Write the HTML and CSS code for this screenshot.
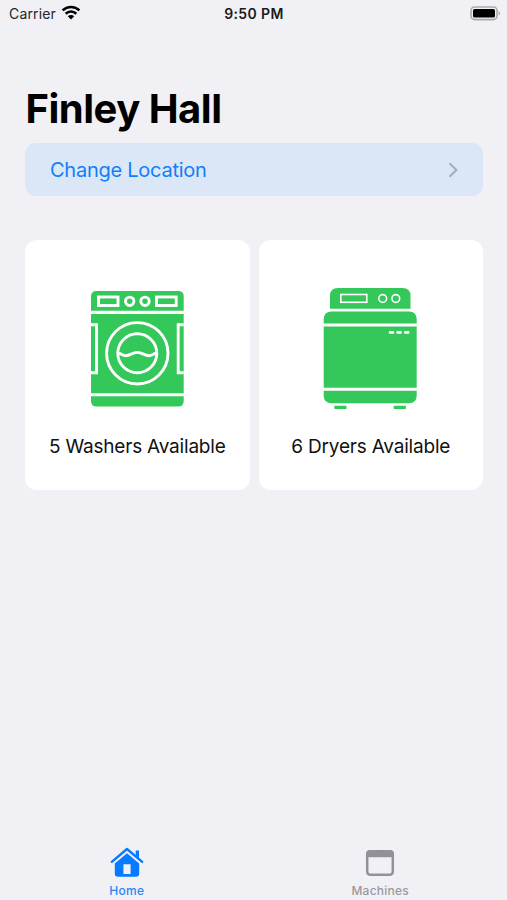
FILE: index.html
```
<!DOCTYPE html>
<html lang="en">
<head>
    <meta charset="UTF-8">
    <meta name="viewport" content="width=device-width, initial-scale=1.0">
    <title>Finley Hall</title>
    <link rel="stylesheet" href="styles.css">
</head>
<body>

    <header class="status-bar">
        <div class="carrier">
            <span>Carrier</span>
            <svg class="wifi" viewBox="0 0 20 15" width="20" height="15">
                <path d="M1.600 5.400a12 12 0 0 1 16.800 0" />
                <path d="M4.700 8.700a7.600 7.600 0 0 1 10.600 0" />
                <path class="dot" d="M10 14.600l-3.200-3.300a4.600 4.600 0 0 1 6.400 0z" />
            </svg>
        </div>
        <div class="time">9:50 PM</div>
        <div class="battery">
            <svg viewBox="0 0 31 15" width="31" height="15">
                <rect x="1" y="1" width="26" height="12.600" rx="3.600" fill="#f2f1f6" stroke="#aaa9ad" stroke-width="1.600" />
                <rect x="3" y="3" width="22" height="8.600" rx="1.600" fill="#000" />
                <path d="M28.600 5q3 2.300 0 4.600z" fill="#aaa9ad" />
            </svg>
        </div>
    </header>

    <main class="main-content">
        <h1>Finley Hall</h1>

        <a class="change-location" href="#">
            <span>Change Location</span>
            <svg viewBox="0 0 10 16" width="10" height="16">
                <path d="M1.500 1.300L8.300 8l-6.800 6.700" />
            </svg>
        </a>

        <div class="cards">
            <div class="card">
                <!-- Washer -->
                <svg class="machine" viewBox="0 0 115 135" width="115" height="135">
                    <path class="fill" d="M11 30.700V16.500q0-5.500 5.500-5.500h81.700q5.500 0 5.500 5.500v14.200z" />
                    <path class="fill" d="M11 34h92.700v79.300H11z" />
                    <path class="fill" d="M11 116.300h92.700v4.700q0 5.600-5.500 5.600H16.500q-5.500 0-5.500-5.600z" />
                    <g class="line">
                        <rect x="18.500" y="17" width="19.500" height="8.500" />
                        <rect x="76.500" y="17" width="19.700" height="8.500" />
                        <circle cx="49.700" cy="21.300" r="4.200" />
                        <circle cx="65" cy="21.300" r="4.200" />
                        <path d="M11 44.700h5.500v48H11" />
                        <path d="M103.700 44.700h-5.500v48h5.500" />
                        <circle cx="57.300" cy="73.300" r="30.700" />
                        <circle cx="57.300" cy="73.300" r="19.500" />
                        <path d="M38.500 73.200c3 .3 4 2.500 7.300 2.500 4.400 0 6.500-3.300 11.500-3.300s7.100 3.300 11.500 3.300c3.300 0 4.300-2.200 7.300-2.500" />
                    </g>
                </svg>
                <p>5 Washers Available</p>
            </div>

            <div class="card">
                <!-- Dryer -->
                <svg class="machine" viewBox="1 0 115 135" width="115" height="135">
                    <path class="fill" d="M18 28.800V16q0-8 8-8h64.500q8 0 8 8v12.800z" />
                    <path class="fill" d="M11.700 43.500v-4q0-8 8-8h77q8 0 8 8v4z" />
                    <path class="fill" d="M11.700 46.500h93v61.300h-93z" />
                    <path class="fill" d="M11.700 110.700h93v4.500q0 8-8 8h-77q-8 0-8-8z" />
                    <rect class="fill" x="22.300" y="125.700" width="12.200" height="3.300" rx=".7" />
                    <rect class="fill" x="81.700" y="125.700" width="12.200" height="3.300" rx=".7" />
                    <g class="line thin">
                        <rect x="28.800" y="14.500" width="26" height="7.800" />
                        <circle cx="70.700" cy="18.500" r="3.900" />
                        <circle cx="83.800" cy="18.500" r="3.900" />
                    </g>
                    <g class="vents">
                        <rect x="76.800" y="51" width="5.400" height="2.800" rx="1" />
                        <rect x="84.400" y="51" width="5.400" height="2.800" rx="1" />
                        <rect x="92" y="51" width="5.400" height="2.800" rx="1" />
                    </g>
                </svg>
                <p>6 Dryers Available</p>
            </div>
        </div>
    </main>

    <nav class="tab-bar">
        <a class="tab active" href="#">
            <svg viewBox="0 0 34 32" width="34" height="32">
                <path class="roof" d="M1.800 16.800L17 4l15.200 12.800" />
                <path class="house" d="M25.700 5.500h3.300v9l-3.300-3z" />
                <path class="house" fill-rule="evenodd" d="M17 8.300l12.200 10.200v10q0 3.200-3.200 3.200H8q-3.200 0-3.200-3.200v-10zM13.400 19.300v9.700h7.200v-9.700z" />
            </svg>
            <span>Home</span>
        </a>
        <a class="tab" href="#">
            <svg viewBox="0 0 34 32" width="34" height="32">
                <rect x="4.200" y="6.200" width="25.600" height="23.600" rx="3" fill="none" stroke="#929197" stroke-width="2.500" />
                <path d="M3 12.300V9q0-4 4-4h20q4 0 4 4v3.300z" fill="#929197" />
            </svg>
            <span>Machines</span>
        </a>
    </nav>

</body>
</html>
```

FILE: styles.css
```
* {
    box-sizing: border-box;
}

body {
    font-family: Inter, "Liberation Sans", sans-serif;
    margin: 0;
    min-height: 900px;
    display: flex;
    flex-direction: column;
    background-color: #f1f0f5;
    color: #000;
    white-space: nowrap;
}

a {
    text-decoration: none;
}

svg {
    display: block;
    flex: none;
}

.status-bar {
    display: grid;
    grid-template-columns: 1fr auto 1fr;
    align-items: center;
    height: 27px;
    padding: 0 6px 0 9px;
    font-size: 14px;
}

.carrier {
    display: flex;
    align-items: center;
    gap: 5px;
    color: #242426;
    letter-spacing: 0.15px;
}

.wifi {
    margin-top: -2px;
}

.wifi path {
    fill: none;
    stroke: #000;
    stroke-width: 2.6;
}

.wifi .dot {
    fill: #000;
    stroke: none;
}

.time {
    font-weight: 600;
    letter-spacing: 0.4px;
    color: #1a1a1c;
    margin-right: 2px;
}

.battery {
    justify-self: end;
    margin-top: -1px;
}

.main-content {
    flex: 1;
    padding: 58px 24px 0 25px;
}

h1 {
    margin: 0;
    padding-left: 0.5px;
    height: 58px;
    font-size: 40px;
    line-height: 48px;
    font-weight: 700;
    letter-spacing: -0.5px;
}

.change-location {
    display: flex;
    align-items: center;
    justify-content: space-between;
    height: 53px;
    padding: 0 25px;
    border-radius: 11px;
    background-color: #dbe7f7;
    color: #107ffa;
    font-size: 20px;
    letter-spacing: -0.25px;
}

.change-location path {
    fill: none;
    stroke: #a6afbc;
    stroke-width: 2.2;
}

.cards {
    display: grid;
    grid-template-columns: 1fr 1fr;
    gap: 9px;
    margin-top: 44px;
}

.card {
    display: flex;
    flex-direction: column;
    align-items: center;
    height: 249.5px;
    padding-top: 40px;
    border-radius: 12px;
    background-color: #fff;
}

.card p {
    margin: 20px 0 0;
    font-size: 19px;
    line-height: 24px;
    letter-spacing: -0.2px;
    color: #111;
}

.machine .fill {
    fill: #34c759;
}

.machine .line {
    fill: none;
    stroke: #fff;
    stroke-width: 2.9;
}

.machine .thin {
    stroke-width: 1.6;
}

.machine .vents {
    fill: #fff;
}

.tab-bar {
    display: grid;
    grid-template-columns: 1fr 1fr;
    height: 55px;
}

.tab {
    display: flex;
    flex-direction: column;
    align-items: center;
    gap: 6px;
    color: #9a999f;
    font-size: 12px;
    line-height: 15px;
    font-weight: 500;
    letter-spacing: 0.25px;
}

.tab.active {
    color: #2a86f7;
}

.roof {
    fill: none;
    stroke: #067bff;
    stroke-width: 2.4;
    stroke-linecap: round;
    stroke-linejoin: round;
}

.house {
    fill: #067bff;
}
```
